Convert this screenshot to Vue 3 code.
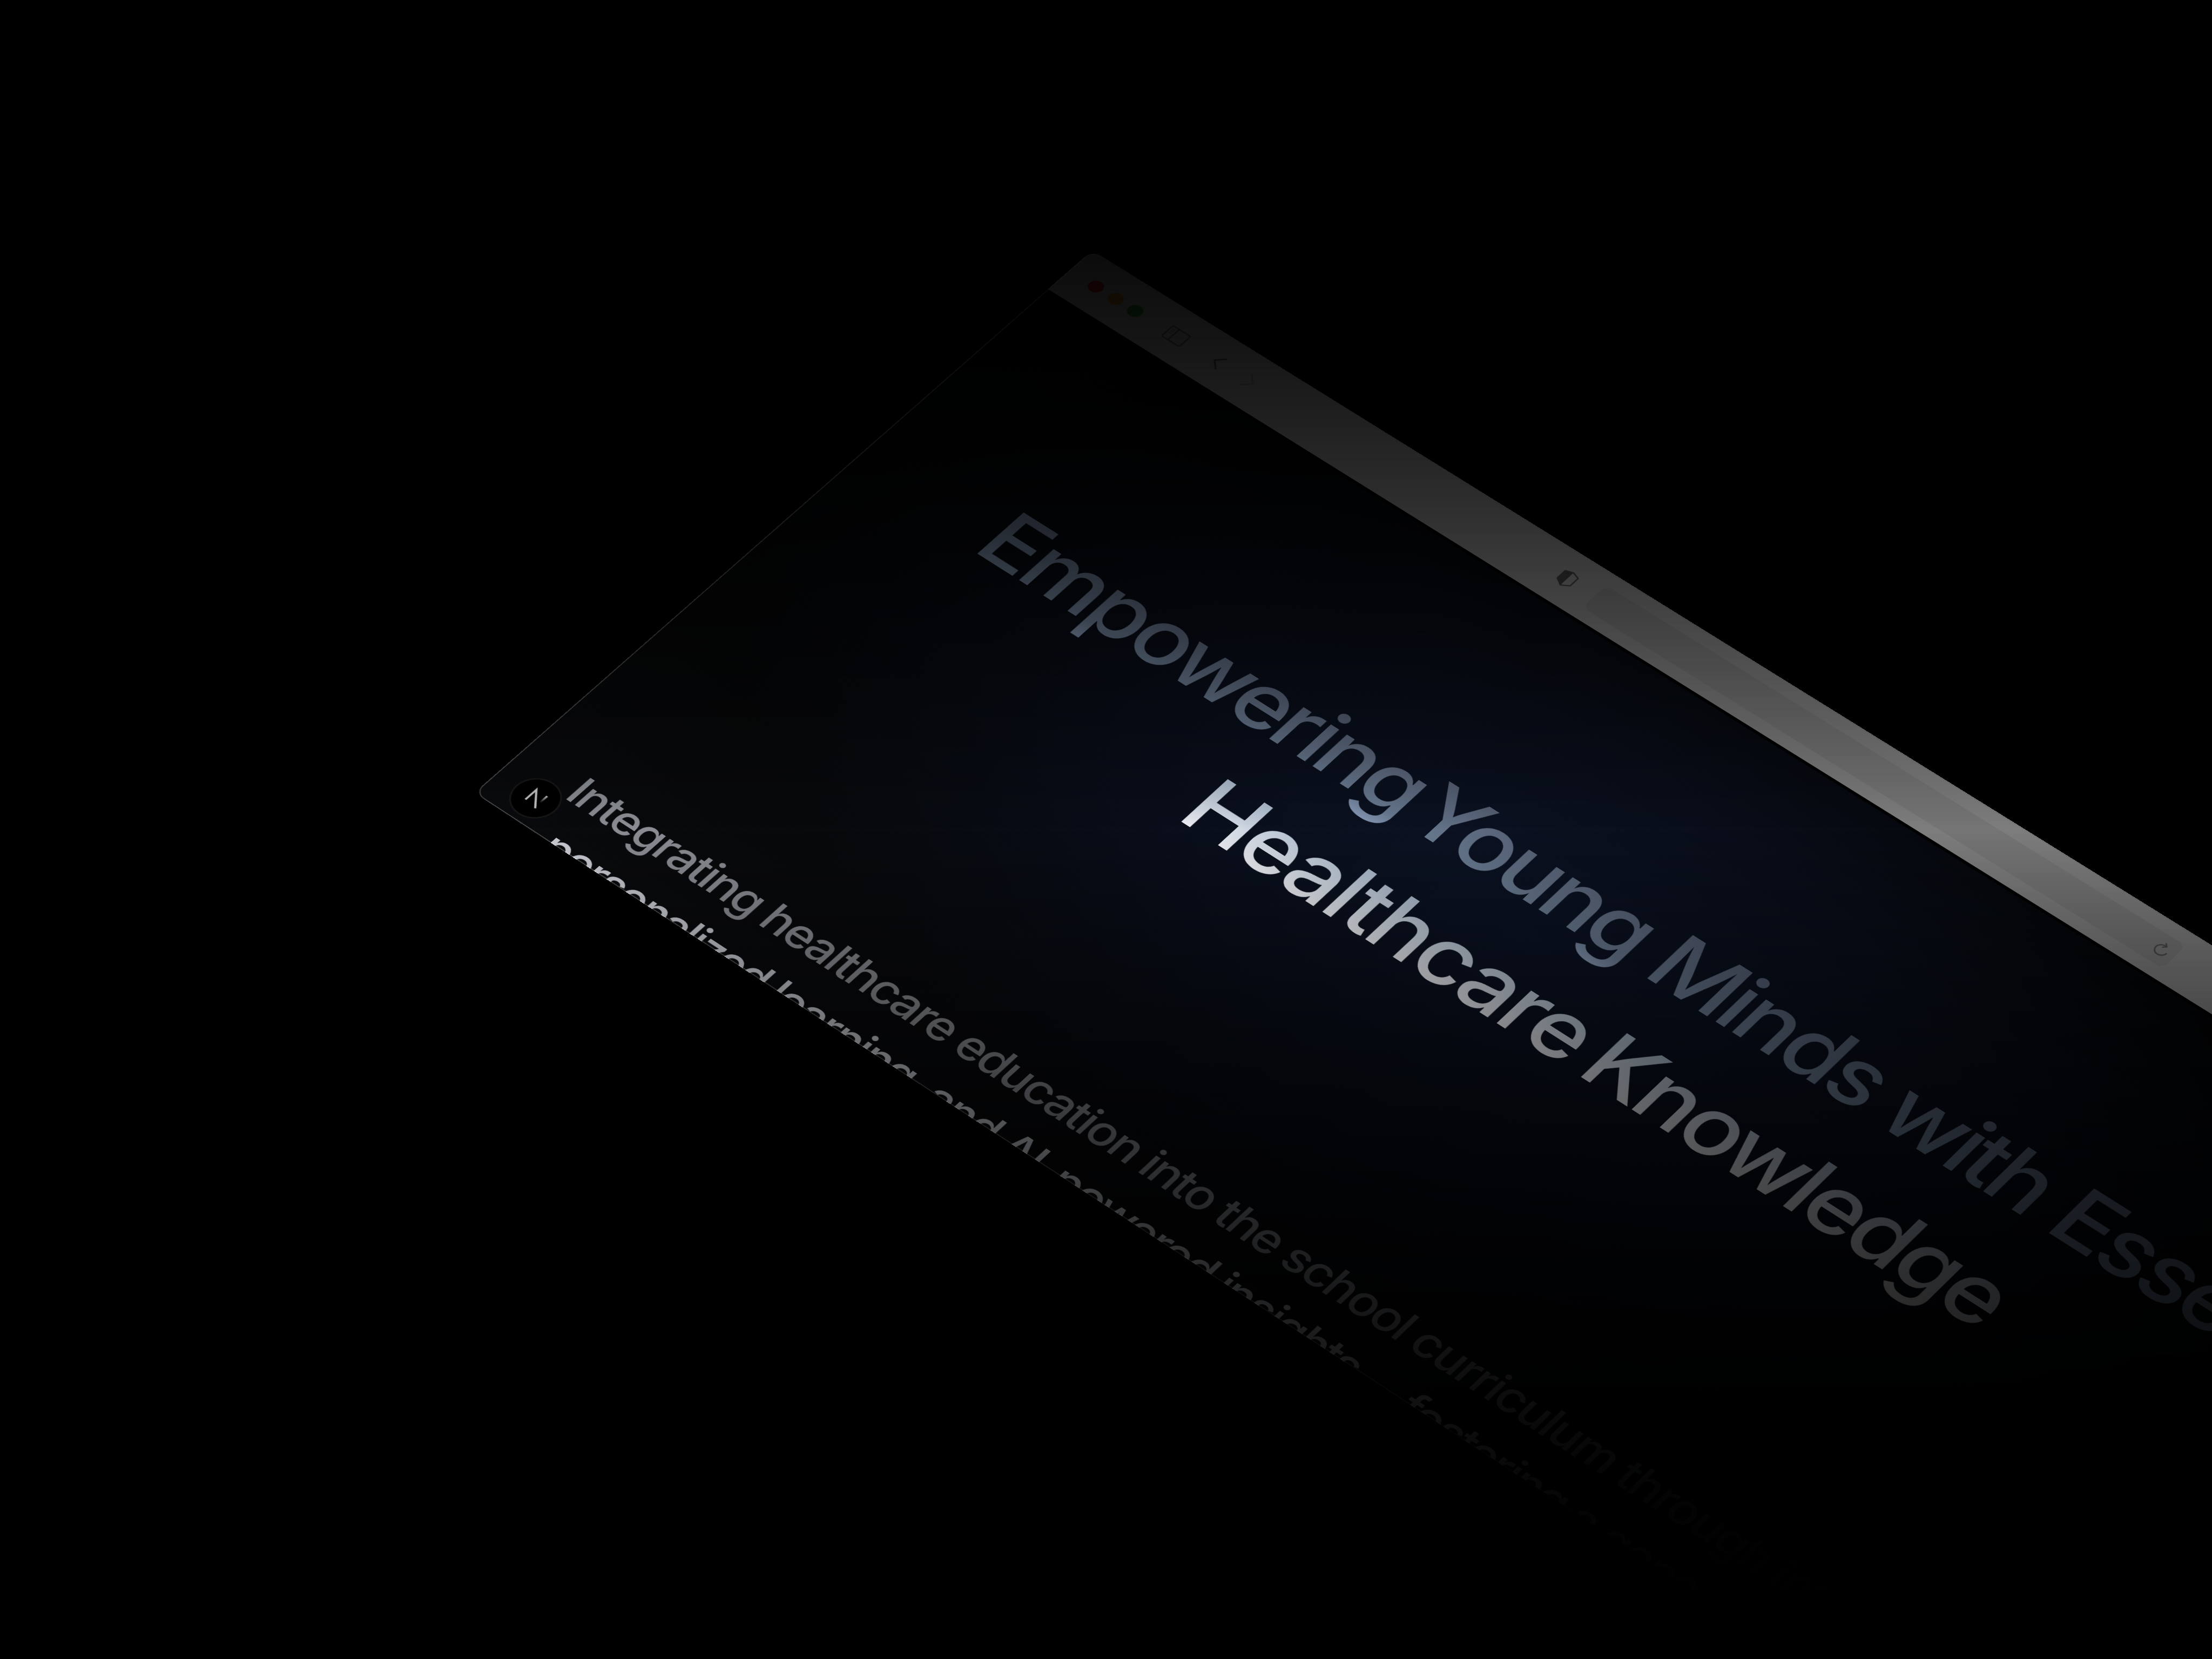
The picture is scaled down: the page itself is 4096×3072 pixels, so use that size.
<script setup>
const lights = ['#8c1216', '#845818', '#18601e']

// Each word carries its own optical tracking (em) and the gap that precedes it (px).
const headline = [
  [
    { text: 'Empowering', track: -0.047, gap: 0 },
    { text: 'Young', track: -0.047, gap: -22 },
    { text: 'Minds', track: -0.047, gap: 3 },
    { text: 'with', track: -0.047, gap: -1 },
    { text: 'Essential', track: -0.047, gap: 4 }
  ],
  [
    { text: 'Healthcare', track: -0.031, gap: 0 },
    { text: 'Knowledge', track: -0.046, gap: -10 }
  ]
]
const copy = [
  'Integrating healthcare education into the school curriculum through interactive,',
  'personalized learning, and AI-powered insights— fostering a generation'
]

const wordStyle = (w) => ({ letterSpacing: w.track + 'em', marginLeft: w.gap + 'px' })
</script>

<template>
  <main class="stage">
    <section class="window">
      <header class="toolbar">
        <div class="lights">
          <span v-for="c in lights" :key="c" class="light" :style="{ background: c }"></span>
        </div>
        <svg class="sidebar" viewBox="0 0 42 34" fill="none" stroke="#454545" stroke-width="2.6">
          <rect x="2" y="2" width="38" height="30" rx="3" />
          <path d="M15.5 2V32" />
          <path d="M6 8.5H11.5M6 13H11.5M6 17.5H11.5" stroke-width="1.6" />
        </svg>
        <svg class="chev back" viewBox="0 0 18 34" fill="none" stroke="#383838" stroke-width="3">
          <path d="M16.5 2L2 17L16.5 32" />
        </svg>
        <svg class="chev next" viewBox="0 0 18 34" fill="none" stroke="#656565" stroke-width="2.8">
          <path d="M1.5 2L16 17L1.5 32" />
        </svg>
        <svg class="shield" viewBox="0 0 32 40">
          <path d="M16 2L29.5 7V28L16 37L2.5 28V7Z" fill="none" stroke="#3a3a3a" stroke-width="2.4" stroke-linejoin="round" />
          <path d="M16 2V37L2.5 28V7Z" fill="#3a3a3a" />
        </svg>
        <div class="address">
          <svg class="reload" viewBox="0 0 28 32" fill="none" stroke="#464646" stroke-width="2.4">
            <path d="M15 7A11 11 0 1 0 25 18" />
            <path d="M11.5 1.5L17 7L11.5 12.5" />
          </svg>
        </div>
      </header>
      <article class="page">
        <h1 class="headline">
          <span v-for="(line, i) in headline" :key="i" class="line" :class="'h' + i">
            <template v-for="(w, j) in line" :key="j">{{ j ? ' ' : '' }}<span :style="wordStyle(w)">{{ w.text }}</span></template>
          </span>
        </h1>
        <p class="copy">
          <span v-for="(line, i) in copy" :key="i" class="line" :class="'c' + i">{{ line }}</span>
        </p>
      </article>
      <div class="badge">
        <svg viewBox="0 0 44 44" fill="none">
          <defs>
            <linearGradient id="stem" x1="0" y1="0" x2="0" y2="1">
              <stop offset="0" stop-color="#c8c8c8" />
              <stop offset="1" stop-color="#c8c8c8" stop-opacity="0" />
            </linearGradient>
          </defs>
          <path d="M10.5 34V7L35 38" stroke="#c4c4c4" stroke-width="3.6" />
          <rect x="31" y="6" width="3.6" height="18" fill="url(#stem)" />
        </svg>
      </div>
    </section>
    <div class="shade"></div>
  </main>
</template>

<style>
body {
  margin: 0;
  background: #000;
}
</style>

<style scoped>
.stage {
  position: relative;
  width: 4096px;
  height: 3072px;
  overflow: hidden;
  background: #000;
  font-family: Inter, "Liberation Sans", sans-serif;
}
.window {
  position: relative;
  display: flex;
  flex-direction: column;
  width: 3438px;
  height: 1570px;
  overflow: hidden;
  border-radius: 20px;
  background: #040506;
  transform-origin: 0 0;
  transform: matrix3d(0.81705, 0.51993, 0, -0.00001616, -0.74757, 0.60857, 0, -0.00002133, 0, 0, 1, 0, 2022.4, 463.4, 0, 1);
}
.window::after {
  content: "";
  position: absolute;
  inset: 0;
  border: 2px solid rgba(255, 255, 255, 0.24);
  border-radius: 20px;
}
.toolbar {
  display: flex;
  align-items: center;
  flex: none;
  box-sizing: border-box;
  height: 116px;
  padding-left: 44px;
  background: #7d7d7d;
  border-top: 2px solid #4c4c4c;
}
.lights {
  display: flex;
  gap: 15.6px;
}
.light {
  width: 27px;
  height: 27px;
  border-radius: 50%;
}
.sidebar {
  width: 42px;
  height: 34px;
  margin-left: 54px;
}
.chev {
  width: 18px;
  height: 34px;
}
.back {
  margin-left: 60px;
}
.next {
  margin-left: 50px;
}
.shield {
  width: 32px;
  height: 40px;
  margin-left: 650px;
}
.address {
  display: flex;
  align-items: center;
  justify-content: flex-end;
  box-sizing: border-box;
  width: 1194px;
  height: 63px;
  margin-left: 42px;
  padding-right: 11px;
  border-radius: 14px;
  background: #757575;
}
.reload {
  width: 28px;
  height: 32px;
}
.page {
  flex: 1;
  border-top: 6px solid #010101;
  background: radial-gradient(ellipse 1500px 820px at 1480px 580px, rgb(12, 19, 36), rgba(10, 15, 28, 0.88) 50%, rgba(5, 7, 11, 0) 100%),
    linear-gradient(#030404, #060708 60%, #0a0b0e);
}
.headline {
  margin: 349px 0 0;
  font-size: 163px;
  font-weight: 500;
  line-height: 230px;
  letter-spacing: -0.047em;
  white-space: nowrap;
  color: transparent;
  background: linear-gradient(rgb(84, 94, 114) 56px, rgb(104, 121, 143) 173px, rgb(133, 151, 180) 211px, rgb(172, 188, 206) 286px, rgb(235, 237, 242) 403px, #fff 441px);
  -webkit-background-clip: text;
  background-clip: text;
}
.line {
  display: block;
}
.h0 {
  padding-left: 276px;
}
.h1 {
  padding-left: 900px;
}
.copy {
  margin: 465px 0 0;
  font-size: 83px;
  font-weight: 500;
  line-height: 117px;
  letter-spacing: -0.04em;
  white-space: nowrap;
}
.c0 {
  padding-left: 116px;
  color: #8a8d93;
}
.c1 {
  padding-left: 158px;
  letter-spacing: -0.049em;
  color: #c9ccd3;
}
.badge {
  position: absolute;
  left: 41px;
  bottom: 12px;
  display: flex;
  align-items: center;
  justify-content: center;
  box-sizing: border-box;
  width: 85px;
  height: 87px;
  border: 3px solid #171717;
  border-radius: 50%;
  background: #000;
}
.badge svg {
  width: 44px;
  height: 44px;
}
.shade {
  position: absolute;
  inset: 0;
  background: linear-gradient(#000, rgba(0, 0, 0, 0) 50%, #000), linear-gradient(#000, rgba(0, 0, 0, 0) 50%, #000 97%);
}
</style>
